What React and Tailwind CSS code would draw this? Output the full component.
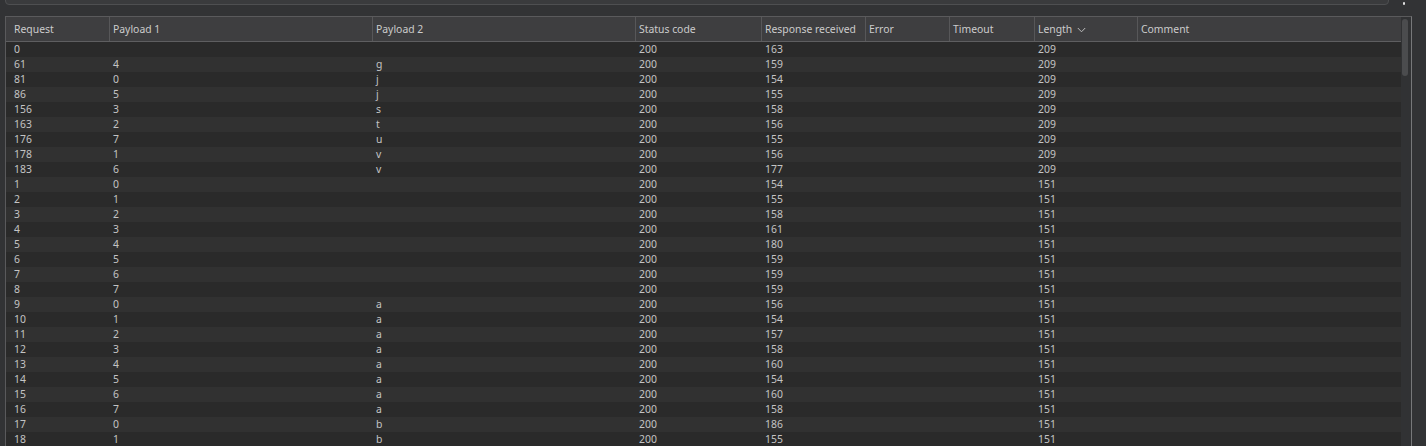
import React from "react";

const columns = [
  { label: "Request", w: "w-[103px]" },
  { label: "Payload 1", w: "w-[263px]" },
  { label: "Payload 2", w: "w-[263px]" },
  { label: "Status code", w: "w-[126px]" },
  { label: "Response received", w: "w-[104px]" },
  { label: "Error", w: "w-[84px]" },
  { label: "Timeout", w: "w-[85px]" },
  { label: "Length", w: "w-[103px]", sort: true },
  { label: "Comment", w: "w-[264px]" },
];

const rows = [
  ["0", "", "", "200", "163", "", "", "209", ""],
  ["61", "4", "g", "200", "159", "", "", "209", ""],
  ["81", "0", "j", "200", "154", "", "", "209", ""],
  ["86", "5", "j", "200", "155", "", "", "209", ""],
  ["156", "3", "s", "200", "158", "", "", "209", ""],
  ["163", "2", "t", "200", "156", "", "", "209", ""],
  ["176", "7", "u", "200", "155", "", "", "209", ""],
  ["178", "1", "v", "200", "156", "", "", "209", ""],
  ["183", "6", "v", "200", "177", "", "", "209", ""],
  ["1", "0", "", "200", "154", "", "", "151", ""],
  ["2", "1", "", "200", "155", "", "", "151", ""],
  ["3", "2", "", "200", "158", "", "", "151", ""],
  ["4", "3", "", "200", "161", "", "", "151", ""],
  ["5", "4", "", "200", "180", "", "", "151", ""],
  ["6", "5", "", "200", "159", "", "", "151", ""],
  ["7", "6", "", "200", "159", "", "", "151", ""],
  ["8", "7", "", "200", "159", "", "", "151", ""],
  ["9", "0", "a", "200", "156", "", "", "151", ""],
  ["10", "1", "a", "200", "154", "", "", "151", ""],
  ["11", "2", "a", "200", "157", "", "", "151", ""],
  ["12", "3", "a", "200", "158", "", "", "151", ""],
  ["13", "4", "a", "200", "160", "", "", "151", ""],
  ["14", "5", "a", "200", "154", "", "", "151", ""],
  ["15", "6", "a", "200", "160", "", "", "151", ""],
  ["16", "7", "a", "200", "158", "", "", "151", ""],
  ["17", "0", "b", "200", "186", "", "", "151", ""],
  ["18", "1", "b", "200", "155", "", "", "151", ""],
];

const App = () => {
  return (
    <div className="w-[1426px] h-[446px] overflow-hidden bg-[#323335] text-[10.4px] text-[#c4c4c4] font-['Noto_Sans',sans-serif]">
      {/* Filter bar, mostly scrolled out of view */}
      <div className="flex items-center -mt-[21px] h-[26px]">
        <div className="ml-[5px] w-[1384px] h-full flex items-center gap-2 px-3 bg-[#3a3b3d] border border-[#4e4f51] rounded-[4px]">
          <svg width="12" height="12" viewBox="0 0 12 12" fill="none" stroke="#9a9a9a" strokeWidth="1.3">
            <circle cx="5" cy="5" r="3.5" />
            <path d="M7.6 7.6L11 11" />
          </svg>
          <span className="text-[#9a9a9a]">Filter settings: Showing all items</span>
        </div>
        <div className="ml-[14px] w-[4px] h-[26px] flex items-end">
          <div className="w-[2px] h-[3px] bg-[#e0e0e0] rounded-[1px]" />
        </div>
      </div>

      {/* Results table */}
      <div className="mt-[11px] ml-[5px] w-[1407px] h-[440px] flex border-l border-t border-[#5a5a5c] border-r-[#77787a] border-r">
        <div className="w-[1395px] flex flex-col">
          <div className="flex h-[25px] bg-[#3e3e40] border-b border-[#5e5e60]">
            {columns.map((c, i) => (
              <div
                key={c.label}
                className={`${c.w} h-full flex items-center gap-[5px] pt-[2px] text-[#cccccc] ${
                  i === 0 ? "pl-[8px]" : "pl-[3px] border-l border-[#575759]"
                }`}
              >
                <span>{c.label}</span>
                {c.sort && (
                  <svg width="9" height="6" viewBox="0 0 9 6" fill="none" stroke="#bdbdbd" strokeWidth="1">
                    <path d="M0.8 1L4.5 4.8L8.2 1" />
                  </svg>
                )}
              </div>
            ))}
          </div>
          {rows.map((r, ri) => (
            <div
              key={ri}
              className={`flex h-[15px] leading-[14px] ${ri % 2 === 0 ? "bg-[#2a2a2a]" : "bg-[#313131]"}`}
            >
              {r.map((v, ci) => (
                <div
                  key={ci}
                  className={`${columns[ci].w} ${ci === 0 ? "pl-[8px]" : "pl-[4px]"} whitespace-nowrap`}
                >
                  {v}
                </div>
              ))}
            </div>
          ))}
        </div>
        <div className="w-[10px] bg-[#313234] pt-[2px] pl-[1px]">
          <div className="w-[6px] h-[57px] rounded-full bg-[#4b4c4e]" />
        </div>
      </div>
    </div>
  );
};

export default App;
